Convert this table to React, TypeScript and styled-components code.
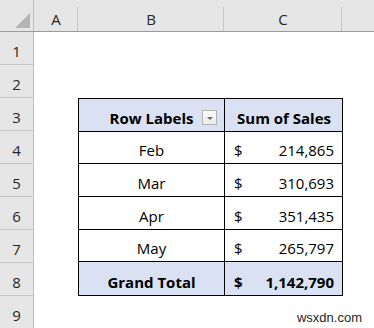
import React from 'react';
import styled, { createGlobalStyle } from 'styled-components';

const GlobalStyle = createGlobalStyle`
  html, body {
    margin: 0;
    padding: 0;
    background: #ffffff;
  }
  body {
    font-family: "Open Sans", Lato, sans-serif;
  }
`;

const Sheet = styled.div`
  position: relative;
  display: grid;
  grid-template-columns: 34px 44px 146px 118px 32px;
  grid-template-rows: 32px repeat(9, 33px);
  width: 374px;
  height: 328px;
  overflow: hidden;
  background: #ffffff;
`;

const Corner = styled.div`
  position: relative;
  background: #e6e6e6;
  border-right: 1px solid #bdbdbd;
  border-bottom: 1px solid #9b9b9b;
  box-sizing: border-box;
  &::after {
    content: '';
    position: absolute;
    right: 3px;
    bottom: 3px;
    width: 0;
    height: 0;
    border-left: 15px solid transparent;
    border-bottom: 15px solid #b4b4b4;
  }
`;

const ColHead = styled.div<{ $last?: boolean }>`
  position: relative;
  display: flex;
  align-items: flex-end;
  justify-content: center;
  padding-bottom: 2px;
  box-sizing: border-box;
  background: #e6e6e6;
  border-bottom: 1px solid #9b9b9b;
  color: #262626;
  font-size: 15px;
  line-height: 20px;
  &::after {
    content: '';
    position: absolute;
    right: 0;
    top: 7px;
    bottom: 0;
    width: 1px;
    background: ${(p) => (p.$last ? 'transparent' : '#c6c6c6')};
  }
`;

const RowHead = styled.div`
  display: flex;
  align-items: flex-end;
  justify-content: center;
  padding-bottom: 3px;
  box-sizing: border-box;
  background: #e6e6e6;
  border-right: 1px solid #bdbdbd;
  border-bottom: 1px solid #c6c6c6;
  color: #262626;
  font-size: 15px;
  line-height: 20px;
  grid-column: 1;
`;

const PivotTable = styled.div`
  grid-column: 3 / 5;
  grid-row: 4 / 10;
  display: grid;
  grid-template-columns: 146px 1fr;
  grid-auto-rows: 1fr;
  border: 1px solid #000000;
  box-sizing: border-box;
  margin-right: -1px;
`;

const Cell = styled.div<{ $band?: boolean; $last?: boolean }>`
  position: relative;
  display: flex;
  align-items: flex-end;
  padding-bottom: 3px;
  box-sizing: border-box;
  background: ${(p) => (p.$band ? '#d9e1f2' : '#ffffff')};
  border-bottom: ${(p) => (p.$last ? 'none' : '1px solid #000000')};
  color: #000000;
  font-size: 15px;
  line-height: 20px;
  font-weight: ${(p) => (p.$band ? 700 : 400)};
`;

const LabelCell = styled(Cell)`
  justify-content: center;
  border-right: 1px solid #000000;
`;

const ValueCell = styled(Cell)<{ $center?: boolean }>`
  justify-content: ${(p) => (p.$center ? 'center' : 'space-between')};
  padding-left: 9px;
  padding-right: 8px;
`;

const FilterButton = styled.div`
  position: absolute;
  right: 7px;
  bottom: 6px;
  width: 15px;
  height: 15px;
  box-sizing: border-box;
  border: 1px solid #b2b2b2;
  background: linear-gradient(#fafafa, #ececec);
  display: flex;
  align-items: center;
  justify-content: center;
  &::after {
    content: '';
    width: 0;
    height: 0;
    margin-top: 2px;
    border-left: 3px solid transparent;
    border-right: 3px solid transparent;
    border-top: 3px solid #6b6b6b;
  }
`;

const Watermark = styled.div`
  position: absolute;
  right: 12px;
  bottom: 3px;
  font-family: "Liberation Sans", Arial, sans-serif;
  font-size: 13px;
  color: #1f1f1f;
`;

const rows = [
  { month: 'Feb', value: '214,865' },
  { month: 'Mar', value: '310,693' },
  { month: 'Apr', value: '351,435' },
  { month: 'May', value: '265,797' },
];

const App: React.FC = () => {
  return (
    <>
      <GlobalStyle />
      <Sheet>
        <Corner />
        <ColHead>A</ColHead>
        <ColHead>B</ColHead>
        <ColHead>C</ColHead>
        <ColHead $last />
        {[1, 2, 3, 4, 5, 6, 7, 8, 9].map((n) => (
          <RowHead key={n} style={{ gridRow: n + 1 }}>{n}</RowHead>
        ))}
        <PivotTable>
          <LabelCell $band>
            Row Labels
            <FilterButton />
          </LabelCell>
          <ValueCell $band $center>Sum of Sales</ValueCell>
          {rows.map((r) => (
            <React.Fragment key={r.month}>
              <LabelCell>{r.month}</LabelCell>
              <ValueCell>
                <span>$</span>
                <span>{r.value}</span>
              </ValueCell>
            </React.Fragment>
          ))}
          <LabelCell $band $last>Grand Total</LabelCell>
          <ValueCell $band $last>
            <span>$</span>
            <span>1,142,790</span>
          </ValueCell>
        </PivotTable>
        <Watermark>wsxdn.com</Watermark>
      </Sheet>
    </>
  );
};

export default App;
